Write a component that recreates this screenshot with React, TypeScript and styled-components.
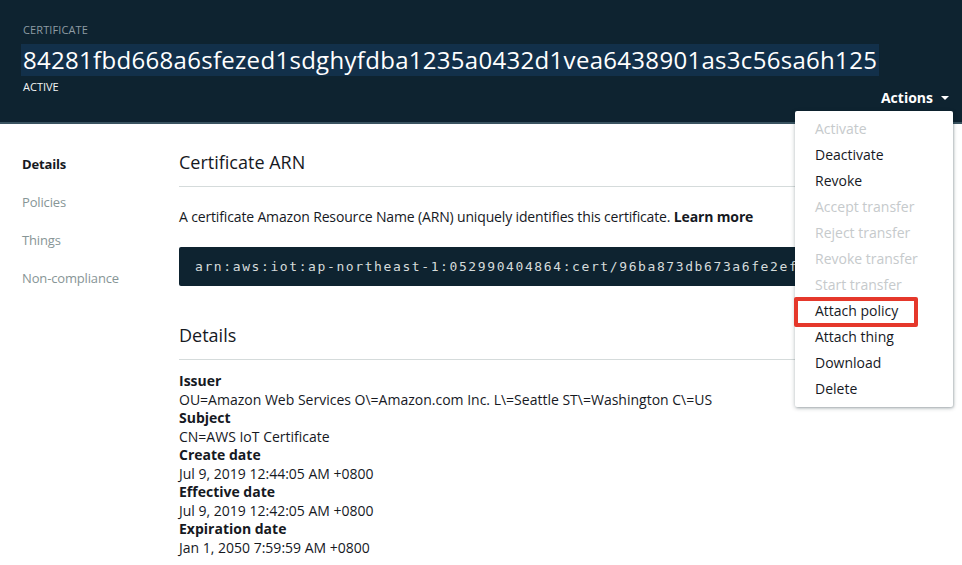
import React from "react";
import styled, { createGlobalStyle } from "styled-components";

const Global = createGlobalStyle`
  html, body { margin: 0; padding: 0; background: #fff; }
  body { font-family: "Open Sans", "Noto Sans", sans-serif; color: #16191f; }
  * { box-sizing: border-box; }
`;

const Page = styled.div`
  position: relative;
  width: 962px;
  height: 565px;
  overflow: hidden;
  background: #fff;
`;

const Header = styled.header`
  background: #0e2330;
  border-bottom: 2px solid #3a5360;
  height: 124px;
  padding: 22px 22px 0 23px;
  display: flex;
  flex-direction: column;
`;

const Eyebrow = styled.div`
  font-size: 11px;
  color: #8d9ba3;
  letter-spacing: 0.1px;
  line-height: 16px;
`;

const Hash = styled.h1`
  margin: 6px 0 0 -2px;
  align-self: flex-start;
  font-size: 24px;
  font-weight: 400;
  line-height: 32px;
  color: #fff;
  background: #12304a;
  padding: 0 2px;
  letter-spacing: 0.3px;
`;

const Status = styled.div`
  margin-top: 3px;
  font-size: 11px;
  color: #f2f4f5;
  line-height: 16px;
`;

const HeaderActions = styled.div`
  display: flex;
  justify-content: flex-end;
  margin-top: -7px;
`;

const ActionsButton = styled.div`
  display: flex;
  align-items: center;
  gap: 8px;
  color: #fff;
  font-weight: 700;
  font-size: 14px;
  line-height: 20px;
  margin-right: -9px;
`;

const Caret = styled.span`
  width: 0;
  height: 0;
  border-left: 4px solid transparent;
  border-right: 4px solid transparent;
  border-top: 4px solid #fff;
`;

const Body = styled.div`
  display: flex;
`;

const Nav = styled.nav`
  width: 179px;
  flex: none;
  padding: 21px 0 0 22px;
  display: flex;
  flex-direction: column;
`;

const NavItem = styled.div<{ $active?: boolean }>`
  font-size: 13px;
  line-height: 38px;
  letter-spacing: -0.15px;
  color: ${(p) => (p.$active ? "#16191f" : "#879596")};
  font-weight: ${(p) => (p.$active ? 700 : 400)};
`;

const Main = styled.main`
  flex: 1;
  padding: 25px 20px 0 0;
`;

const SectionTitle = styled.h2`
  margin: 0;
  font-size: 18px;
  font-weight: 400;
  line-height: 26px;
  color: #16191f;
  padding-bottom: 11px;
  border-bottom: 1px solid #d5dbdb;
`;

const Para = styled.p`
  margin: 20px 0 0;
  font-size: 14px;
  line-height: 20px;
  letter-spacing: -0.15px;
  color: #16191f;
`;

const Strong = styled.b`
  font-weight: 700;
`;

const CodeBox = styled.div`
  margin-top: 20px;
  height: 39px;
  background: #0e2330;
  border-radius: 2px;
  display: flex;
  align-items: center;
  padding-left: 16px;
  font-family: "DejaVu Sans Mono", "Liberation Mono", monospace;
  font-size: 13px;
  letter-spacing: 1.6px;
  color: #d5dbdb;
  white-space: nowrap;
  overflow: hidden;
`;

const Section = styled.section<{ $gap: number }>`
  margin-top: ${(p) => p.$gap}px;
`;

const DetailList = styled.dl`
  margin: 12px 0 0;
  font-size: 14px;
  line-height: 18.5px;
`;

const Term = styled.dt`
  font-weight: 700;
  color: #16191f;
`;

const Desc = styled.dd`
  margin: 0;
  color: #16191f;
`;

const Menu = styled.ul`
  position: absolute;
  top: 111px;
  right: 9px;
  width: 158px;
  margin: 0;
  padding: 5px 0;
  list-style: none;
  background: #fff;
  border-radius: 2px;
  box-shadow: 0 1px 4px rgba(0, 28, 36, 0.3), 1px 1px 2px rgba(0, 28, 36, 0.15);
`;

const MenuItem = styled.li<{ $disabled?: boolean }>`
  position: relative;
  height: 26px;
  line-height: 26px;
  padding-left: 20px;
  font-size: 14px;
  color: ${(p) => (p.$disabled ? "#c6cacc" : "#16191f")};
`;

const Highlight = styled.span`
  position: absolute;
  left: -1px;
  top: -1px;
  width: 124px;
  height: 30px;
  border: 4px solid #e5382b;
  border-radius: 2px;
`;

const menuItems: { label: string; disabled?: boolean; marked?: boolean }[] = [
  { label: "Activate", disabled: true },
  { label: "Deactivate" },
  { label: "Revoke" },
  { label: "Accept transfer", disabled: true },
  { label: "Reject transfer", disabled: true },
  { label: "Revoke transfer", disabled: true },
  { label: "Start transfer", disabled: true },
  { label: "Attach policy", marked: true },
  { label: "Attach thing" },
  { label: "Download" },
  { label: "Delete" },
];

const details: [string, string][] = [
  ["Issuer", "OU=Amazon Web Services O\\=Amazon.com Inc. L\\=Seattle ST\\=Washington C\\=US"],
  ["Subject", "CN=AWS IoT Certificate"],
  ["Create date", "Jul 9, 2019 12:44:05 AM +0800"],
  ["Effective date", "Jul 9, 2019 12:42:05 AM +0800"],
  ["Expiration date", "Jan 1, 2050 7:59:59 AM +0800"],
];

export default function App() {
  return (
    <Page>
      <Global />
      <Header>
        <Eyebrow>CERTIFICATE</Eyebrow>
        <Hash>84281fbd668a6sfezed1sdghyfdba1235a0432d1vea6438901as3c56sa6h125</Hash>
        <Status>ACTIVE</Status>
        <HeaderActions>
          <ActionsButton>
            Actions <Caret />
          </ActionsButton>
        </HeaderActions>
      </Header>
      <Body>
        <Nav>
          <NavItem $active>Details</NavItem>
          <NavItem>Policies</NavItem>
          <NavItem>Things</NavItem>
          <NavItem>Non-compliance</NavItem>
        </Nav>
        <Main>
          <Section $gap={0}>
            <SectionTitle>Certificate ARN</SectionTitle>
            <Para>
              A certificate Amazon Resource Name (ARN) uniquely identifies this certificate.{" "}
              <Strong>Learn more</Strong>
            </Para>
            <CodeBox>arn:aws:iot:ap-northeast-1:052990404864:cert/96ba873db673a6fe2ef0c9e1a4</CodeBox>
          </Section>
          <Section $gap={36}>
            <SectionTitle>Details</SectionTitle>
            <DetailList>
              {details.map(([k, v]) => (
                <React.Fragment key={k}>
                  <Term>{k}</Term>
                  <Desc>{v}</Desc>
                </React.Fragment>
              ))}
            </DetailList>
          </Section>
        </Main>
      </Body>
      <Menu>
        {menuItems.map((m) => (
          <MenuItem key={m.label} $disabled={m.disabled}>
            {m.marked && <Highlight />}
            {m.label}
          </MenuItem>
        ))}
      </Menu>
    </Page>
  );
}
